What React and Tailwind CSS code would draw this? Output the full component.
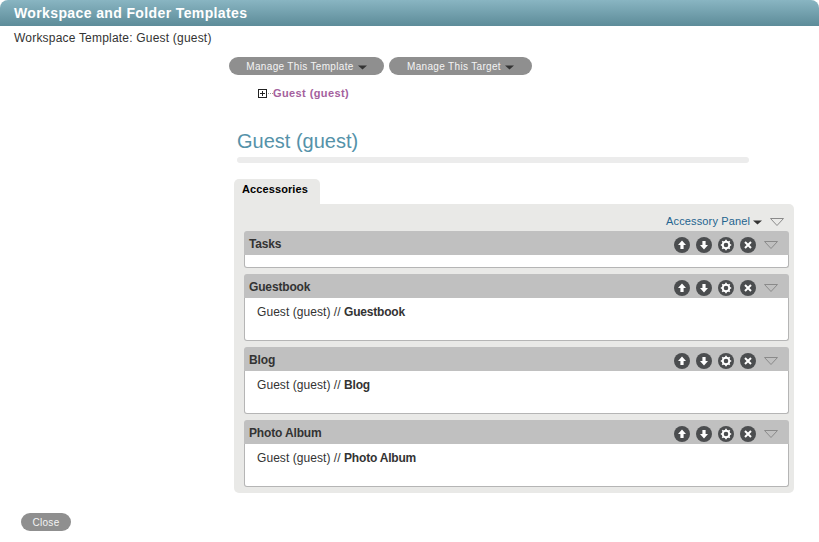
const ArrowDown = ({ className }) => (
  <svg width="9" height="5" viewBox="0 0 9 5" className={className}>
    <path d="M0 0.5h9L4.5 4.5z" fill="#333" />
  </svg>
);

const Chevron = ({ className }) => (
  <svg width="14" height="8" viewBox="0 0 14 8" className={className}>
    <path d="M0.5 0.5h13L7 7.5z" fill="none" stroke="#8a8a8a" strokeWidth="1" />
  </svg>
);

const RoundIcon = ({ children }) => (
  <div className="w-4 h-4 rounded-full bg-[#4b4d4f] flex items-center justify-center">
    <svg width="16" height="16" viewBox="0 0 16 16">
      {children}
    </svg>
  </div>
);

const ToolIcons = () => (
  <div className="flex items-center gap-[6px]">
    <RoundIcon>
      <path d="M8 3.5L12 8H9.6V12H6.4V8H4z" fill="#fff" />
    </RoundIcon>
    <RoundIcon>
      <path d="M8 12.5L4 8H6.4V4H9.6V8H12z" fill="#fff" />
    </RoundIcon>
    <RoundIcon>
      <circle cx="8" cy="8" r="3.3" fill="none" stroke="#fff" strokeWidth="2" />
      <path
        d="M8 2.8V4.4M8 11.6V13.2M2.8 8H4.4M11.6 8H13.2M4.3 4.3L5.4 5.4M10.6 10.6L11.7 11.7M4.3 11.7L5.4 10.6M10.6 5.4L11.7 4.3"
        stroke="#fff"
        strokeWidth="1.6"
      />
    </RoundIcon>
    <RoundIcon>
      <path d="M5 5L11 11M11 5L5 11" stroke="#fff" strokeWidth="2" />
    </RoundIcon>
  </div>
);

const Accessory = ({ title, bodyTitle }) => (
  <div>
    <div className="h-6 bg-[#c0c0c0] rounded-t-[3px] flex items-center justify-between pl-[5px] pr-[11px]">
      <span className="text-[12px] font-bold text-[#333] tracking-[-0.15px] mt-[2px]">{title}</span>
      <div className="flex items-center gap-2 pt-[4px]">
        <ToolIcons />
        <Chevron />
      </div>
    </div>
    <div
      className={
        "bg-white border-x border-b border-[#b5b5b5] rounded-b-[3px] " +
        (bodyTitle ? "h-[43px] pl-3 pt-[7px] text-[12px] leading-[15px] text-[#333]" : "h-[13px]")
      }
    >
      {bodyTitle && (
        <>
          <span className="tracking-[0.06px]">Guest (guest) // </span>
          <b className="tracking-[-0.2px]">{bodyTitle}</b>
        </>
      )}
    </div>
  </div>
);

const PillButton = ({ label, className }) => (
  <div
    className={
      "h-[18px] rounded-full bg-[#8f8f8f] flex items-center justify-center gap-1 text-[10px] tracking-[0.33px] text-[#f4f4f4] " +
      className
    }
  >
    {label}
    <ArrowDown className="mt-[3px]" />
  </div>
);

export default function App() {
  return (
    <div className="w-[819px] h-[542px] bg-white overflow-hidden font-['Liberation_Sans',Arial,sans-serif]">
      <div className="h-[26px] rounded-t-[8px] bg-gradient-to-b from-[#89b5c2] to-[#5d8c99] pl-[14px] flex items-center text-[14px] font-bold text-white tracking-[0.38px]">
        Workspace and Folder Templates
      </div>

      <div className="pl-[14px] mt-[5px] text-[12px] leading-[15px] tracking-[0.2px] text-[#333]">
        Workspace Template: Guest (guest)
      </div>

      <div className="ml-[229px] mt-[11px] flex gap-[5px]">
        <PillButton label="Manage This Template" className="w-[155px]" />
        <PillButton label="Manage This Target" className="w-[143px]" />
      </div>

      <div className="ml-[258px] mt-[11px] h-[15px] flex items-center">
        <div className="w-[9px] h-[9px] border border-[#222] flex items-center justify-center text-[0px] relative">
          <div className="w-[5px] h-px bg-[#222]" />
          <div className="absolute w-px h-[5px] bg-[#222]" />
        </div>
        <div className="w-[5px] ml-px border-t border-dotted border-[#999]" />
        <span className="text-[11px] font-bold text-[#a45f9d] tracking-[0.4px]">Guest (guest)</span>
      </div>

      <div className="ml-[237px] mt-[27px] text-[20px] leading-[26px] text-[#5592a9]">Guest (guest)</div>
      <div className="ml-[237px] mt-[3px] w-[512px] h-[6px] rounded-full bg-[#ececec]" />

      <div className="ml-[234px] mt-[16px] w-[86px] h-[25px] bg-[#e9e9e7] rounded-t-[5px] pl-2 pt-[3px] text-[11px] leading-[14px] font-bold text-black tracking-[0.1px]">
        Accessories
      </div>

      <div className="ml-[234px] w-[560px] h-[289px] bg-[#e9e9e7] rounded-b-[5px] rounded-tr-[5px] pl-[10px] pr-[5px]">
        <div className="h-[27px] flex items-center justify-end gap-2 pt-[7px] pr-[5px] text-[11px] tracking-[0.13px] text-[#24648f]">
          <div className="flex items-center gap-[3px]">
            Accessory Panel
            <ArrowDown className="mt-[2px]" />
          </div>
          <Chevron className="mt-[2px]" />
        </div>
        <div className="flex flex-col gap-[6px]">
          <Accessory title="Tasks" />
          <Accessory title="Guestbook" bodyTitle="Guestbook" />
          <Accessory title="Blog" bodyTitle="Blog" />
          <Accessory title="Photo Album" bodyTitle="Photo Album" />
        </div>
      </div>

      <div className="ml-[21px] mt-[20px] w-[50px] h-[18px] rounded-full bg-[#8f8f8f] flex items-center justify-center text-[10px] tracking-[0.3px] text-[#f4f4f4]">
        Close
      </div>
    </div>
  );
}
